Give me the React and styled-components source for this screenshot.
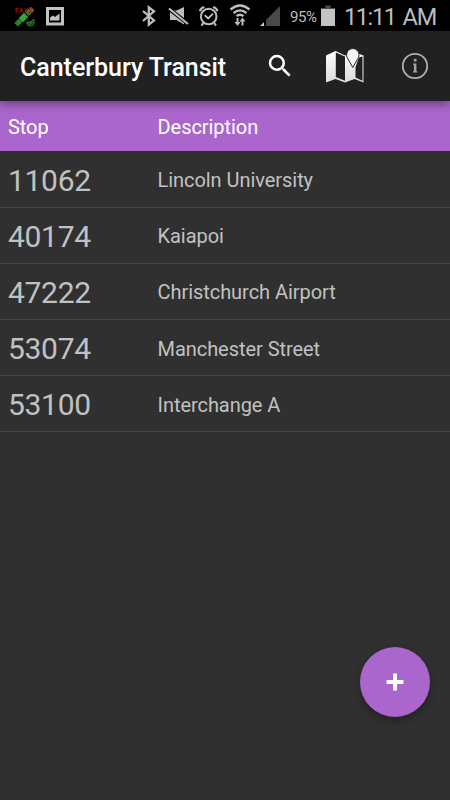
import React from 'react'
import styled, { createGlobalStyle } from 'styled-components';

const GlobalStyle = createGlobalStyle`
    body {
        margin: 0;
        background: #303030;
        font-family: Roboto, sans-serif;
    }
`

const Screen = styled.div`
    position: relative;
    width: 450px;
    height: 800px;
    overflow: hidden;
    background: #303030;
`

const StatusBar = styled.div`
    display: flex;
    align-items: flex-start;
    height: 31px;
    background: #000;
    color: #bdbdbd;
`

const StatusIcon = styled.svg`
    flex: none;
    display: block;
    height: 31px;
    margin-left: ${props => props.$gap}px;
`

const Percent = styled.span`
    flex: none;
    width: 31px;
    margin-left: 10px;
    font-size: 15px;
    line-height: 34px;
    letter-spacing: -0.4px;
`

const Clock = styled.span`
    flex: none;
    margin-left: 9px;
    font-size: 23.5px;
    line-height: 34px;
    letter-spacing: -1.4px;
    white-space: nowrap;
`

const Meridiem = styled.span`
    margin-left: 2.5px;
    letter-spacing: -1px;
`

const AppBar = styled.header`
    position: relative;
    display: flex;
    align-items: center;
    box-sizing: border-box;
    height: 70px;
    padding-left: 20px;
    background: #212121;
    box-shadow: 0 3px 9px rgba(0, 0, 0, 0.4);
`

const Title = styled.h1`
    flex: none;
    width: 245px;
    margin: 0;
    padding-top: 3px;
    color: #fff;
    font-size: 25px;
    font-weight: 500;
    line-height: 30px;
    letter-spacing: -0.04px;
    white-space: nowrap;
`

const Action = styled.button`
    flex: none;
    padding: 0;
    border: 0;
    margin-right: ${props => props.$space || 0}px;
    background: none;
    line-height: 0;
`

const TableHead = styled.div`
    display: flex;
    align-items: center;
    box-sizing: border-box;
    height: 50px;
    padding: 2px 8px 0;
    background: #aa66cc;
    color: #fff;
    font-size: 20px;
    letter-spacing: -0.05px;
`

const StopList = styled.main`
    padding-top: 0.5px;
`

const StopRow = styled.div`
    display: flex;
    align-items: center;
    box-sizing: border-box;
    height: 56.2px;
    padding: 2px 8px 0;
    border-bottom: 1px solid #474747;
    color: #c1c1c1;
    font-size: 20px;
    letter-spacing: -0.05px;
`

const Column = styled.span`
    flex: none;
    width: 149.5px;
`

const StopNumber = styled(Column)`
    font-size: 30px;
    letter-spacing: -0.3px;
`

const AddButton = styled.button`
    position: absolute;
    right: 20px;
    bottom: 83px;
    display: flex;
    align-items: center;
    justify-content: center;
    width: 70px;
    height: 70px;
    padding: 0;
    border: 0;
    border-radius: 50%;
    background: #aa66cc;
    box-shadow: 0 4px 9px rgba(0, 0, 0, 0.3);
`

const stops = [
    { number: '11062', description: 'Lincoln University' },
    { number: '40174', description: 'Kaiapoi' },
    { number: '47222', description: 'Christchurch Airport' },
    { number: '53074', description: 'Manchester Street' },
    { number: '53100', description: 'Interchange A' },
]

const Satellite = () => (
    <StatusIcon $gap={14} width="22" viewBox="0 0 22 31">
        <g transform="rotate(-45 10 17)">
            <path d="M-1 14.5h7v5h-7zM14 14.500h8v5h-8z" fill="#2c902b" />
            <path d="M1 14v6M4 14v6M16 14v6M19 14v6" stroke="#124d14" strokeWidth=".8" />
            <path d="M6 14h7v6H6z" fill="#35a834" />
        </g>
        <path d="M13 22.500q4-.5 7-3.500.8 4-1 6.500-3 1.500-6-.500z" fill="#123c14" stroke="#3c8f3e" strokeDasharray="2 .7" />
        <path d="M15 23.500l3-2.500M15.500 25l3-2.500" stroke="#3c8f3e" strokeWidth=".8" />
        <text x="1" y="12.500" fill="#a51712" fontSize="7" fontWeight="500" textLength="18">FAKE</text>
    </StatusIcon>
)

const Picture = () => (
    <StatusIcon $gap={10} width="18" viewBox="0 0 18 31">
        <path d="M1.500 8.500h15v15.500h-15z" fill="none" stroke="#c2c2c2" strokeWidth="3" />
        <path d="M4 20.500v-3l3-2 2 1.500 4.500-3.500v7z" fill="#c2c2c2" />
    </StatusIcon>
)

const Bluetooth = () => (
    <StatusIcon $gap={77} width="16" viewBox="0 0 16 31">
        <path d="M2 11l11 9.500-5.200 4.200V7.300L13 11.400 2 21" fill="none" stroke="#bdbdbd" strokeWidth="2.300" />
    </StatusIcon>
)

const Muted = () => (
    <StatusIcon $gap={11} width="22" viewBox="0 0 22 31">
        <path d="M2 10.500h6.500L16 7v17.500l-7.500-4.500H2z" fill="#bdbdbd" />
        <path d="M0 8l21 16.500" stroke="#000" strokeWidth="4" />
        <path d="M1 8.500l19 15.500" stroke="#bdbdbd" strokeWidth="2.200" />
    </StatusIcon>
)

const Alarm = () => (
    <StatusIcon $gap={9} width="20" viewBox="0 0 20 31">
        <circle cx="9.700" cy="16.500" r="7.800" fill="none" stroke="#bdbdbd" strokeWidth="2" />
        <path d="M5.800 15.200l3.400 3.300 4.800-4.800" fill="none" stroke="#bdbdbd" strokeWidth="1.900" />
        <path d="M1 11.200q.5-3 4.300-4.200M18.400 11.200q-.5-3-4.300-4.200M4.200 23l-1.700 2.700M15.200 23l1.700 2.700" fill="none" stroke="#bdbdbd" strokeWidth="2.200" />
    </StatusIcon>
)

const Wifi = () => (
    <StatusIcon $gap={10} width="22" viewBox="0 0 22 31">
        <path d="M1.500 9.500q9.500-8 19 0M4.500 13q6.500-5.300 13 0M7.500 16.200q3.500-2.800 7 0" fill="none" stroke="#bdbdbd" strokeWidth="2.300" />
        <path d="M8.500 18v5M13.500 25.500v-5" stroke="#bdbdbd" strokeWidth="2" />
        <path d="M5.500 22h6l-3 4zM10.500 21.500l3-4 3 4z" fill="#bdbdbd" />
    </StatusIcon>
)

const Signal = () => (
    <StatusIcon $gap={9} width="20" viewBox="0 0 20 31">
        <path d="M20 6v20H6v-6z" fill="#494949" />
        <path d="M0 26l4-4v4z" fill="#cfcfcf" />
    </StatusIcon>
)

const Battery = () => (
    <StatusIcon $gap={0} width="14" viewBox="0 0 14 31">
        <path d="M4.500 5.500h5V8H14v2H0V8h4.500z" fill="#4d4d4d" />
        <path d="M0 9h14v17H0z" fill="#c4c4c4" />
    </StatusIcon>
)

const SearchIcon = () => (
    <svg width="30" height="30" viewBox="0 0 24 24" fill="#fff">
        <path d="M15.5 14h-.79l-.28-.27A6.47 6.47 0 0 0 16 9.5 6.5 6.5 0 1 0 9.5 16c1.61 0 3.09-.59 4.23-1.57l.27.28v.79l5 4.99L20.49 19l-4.99-5zm-6 0A4.5 4.5 0 1 1 14 9.5 4.5 4.5 0 0 1 9.5 14z" />
    </svg>
)

const MapIcon = () => (
    <svg width="40" height="36" viewBox="0 0 40 36">
        <defs>
            <linearGradient id="paper" x1="0" y1="0" x2="0" y2="1">
                <stop offset="0" stopColor="#fff" />
                <stop offset="1" stopColor="#dcdcdc" />
            </linearGradient>
        </defs>
        <path d="M1 7.500L10.500 3 20 7.500l9-3.500 9.500 3.500v27L29.500 31 20 34.500 10.500 31 1 34.500z" fill="url(#paper)" />
        <path d="M10.800 4.500l9.200 4v24.200l-9.200-3.700z" fill="#212121" />
        <path d="M30.500 19l3.400-9.500 3.600-1v24.200L30.500 29.500z" fill="#212121" />
        <path d="M27.800 19.500l-5.700-10C20.300 5.300 23.400.6 27.800.6s7.500 4.700 5.700 8.900z" fill="#f3f3f3" stroke="#212121" strokeWidth="1" />
    </svg>
)

const InfoIcon = () => (
    <svg width="28" height="28" viewBox="0 0 28 28">
        <circle cx="14" cy="14" r="12.200" fill="none" stroke="#b0b0b0" strokeWidth="1.800" />
        <path d="M12.800 6.800h2.700v2.700h-2.700zM12 11.500h3.400v7.800h.8v1.300H12v-1.300h.9v-6.500H12z" fill="#a3a3a3" />
    </svg>
)

const App = () => {
    return (
        <Screen>
            <GlobalStyle />
            <StatusBar>
                <Satellite />
                <Picture />
                <Bluetooth />
                <Muted />
                <Alarm />
                <Wifi />
                <Signal />
                <Percent>95%</Percent>
                <Battery />
                <Clock>11:11 <Meridiem>AM</Meridiem></Clock>
            </StatusBar>
            <AppBar>
                <Title>Canterbury Transit</Title>
                <Action $space={30} aria-label="Search"><SearchIcon /></Action>
                <Action $space={36} aria-label="Map"><MapIcon /></Action>
                <Action aria-label="Info"><InfoIcon /></Action>
            </AppBar>
            <TableHead>
                <Column>Stop</Column>
                <span>Description</span>
            </TableHead>
            <StopList>
                {stops.map(stop => (
                    <StopRow key={stop.number}>
                        <StopNumber>{stop.number}</StopNumber>
                        <span>{stop.description}</span>
                    </StopRow>
                ))}
            </StopList>
            <AddButton aria-label="Add stop">
                <svg width="18" height="18" viewBox="0 0 18 18">
                    <path d="M9 .6v16.800M.600 9h16.800" stroke="#fff" strokeWidth="4" />
                </svg>
            </AddButton>
        </Screen>
    )
}

export default App
